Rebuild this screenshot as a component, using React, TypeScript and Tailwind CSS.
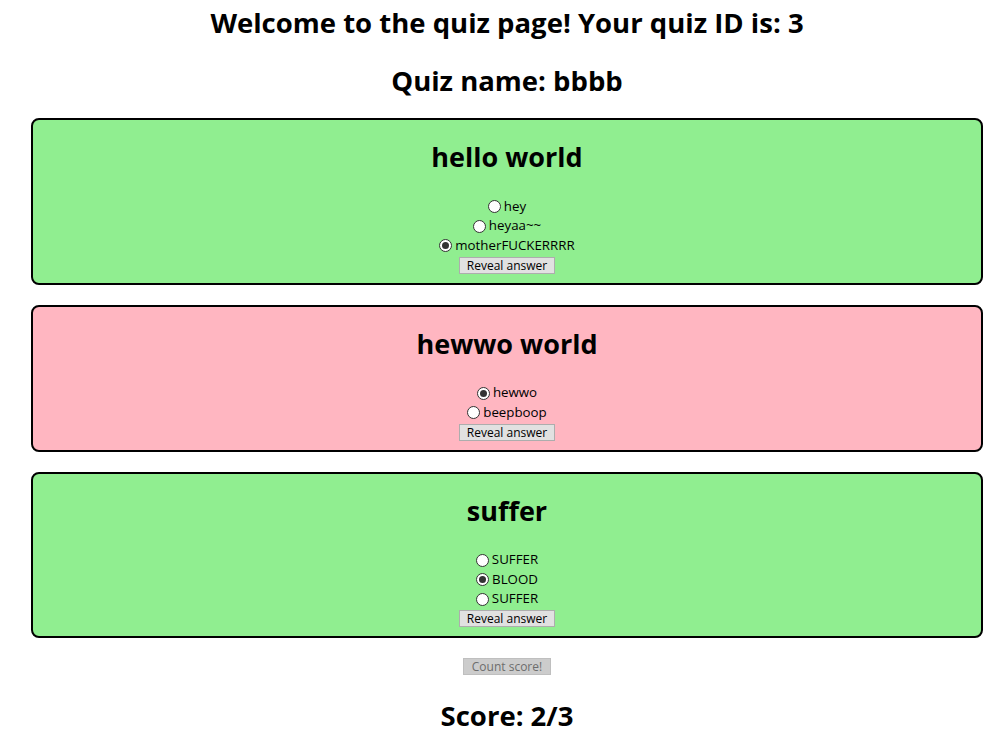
import React from "react";

type Q = { title: string; bg: string; options: string[]; checked: number };

const quizzes: Q[] = [
  { title: "hello world", bg: "bg-[#90ee90]", options: ["hey", "heyaa~~", "motherFUCKERRRR"], checked: 2 },
  { title: "hewwo world", bg: "bg-[#ffb6c1]", options: ["hewwo", "beepboop"], checked: 0 },
  { title: "suffer", bg: "bg-[#90ee90]", options: ["SUFFER", "BLOOD", "SUFFER"], checked: 1 },
];

function Radio({ on }: { on: boolean }) {
  return (
    <span className="mr-[3px] flex h-[13px] w-[13px] items-center justify-center rounded-full border border-[#333333] bg-white">
      {on && <span className="h-[7px] w-[7px] rounded-full bg-[#333333]" />}
    </span>
  );
}

export default function App() {
  return (
    <div className="min-h-[747px] bg-white text-black font-['Open_Sans','Noto_Sans',sans-serif]">
      <div className="ml-[31px] flex w-[952px] flex-col items-center">
        <h1 className="mt-[5px] text-[27.5px] font-bold leading-[36px]">Welcome to the quiz page! Your quiz ID is: 3</h1>
        <h2 className="mt-[22px] text-[27.5px] font-bold leading-[36px]">Quiz name: bbbb</h2>
        <div className="mt-[19px] flex w-full flex-col gap-[20px]">
          {quizzes.map((q, i) => (
            <div key={i} className={`flex flex-col items-center rounded-[8px] border-2 border-black ${q.bg} pt-[19px] pb-[9px]`}>
              <h3 className="text-[27px] font-bold leading-[36px]">{q.title}</h3>
              <div className="mt-[22px] flex flex-col items-center">
                {q.options.map((o, j) => (
                  <div key={j} className="flex h-[19.5px] items-center text-[13.3px]">
                    <Radio on={j === q.checked} />
                    <span>{o}</span>
                  </div>
                ))}
              </div>
              <button className="mt-[1px] h-[17px] w-[96px] border border-[#adadad] bg-[#e1e1e1] text-[12px] leading-[15px] text-black">
                Reveal answer
              </button>
            </div>
          ))}
        </div>
        <button disabled className="mt-[20px] h-[17px] w-[88px] border border-[#bfbfbf] bg-[#cccccc] text-[12px] leading-[15px] text-[#6d6d6d]">
          Count score!
        </button>
        <h2 className="mt-[23px] text-[27.5px] font-bold leading-[36px]">Score: 2/3</h2>
      </div>
    </div>
  );
}
